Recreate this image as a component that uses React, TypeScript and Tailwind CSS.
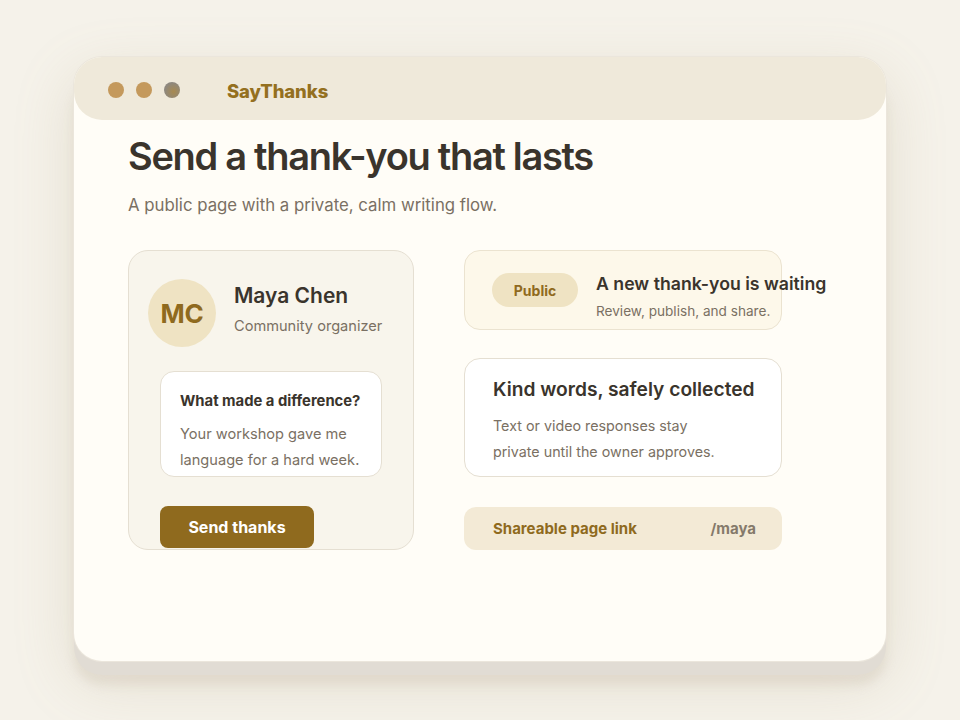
import React from "react";

export default function App() {
  return (
    <div
      className="w-[960px] h-[720px] bg-[#f5f2ea] overflow-hidden pt-[57px] pl-[74px]"
      style={{ fontFamily: "Inter, 'Noto Sans', sans-serif" }}
    >
      <div className="w-[812px] h-[604px] rounded-[28px] bg-[#fffdf7] shadow-[0_0_0_1px_#ebe6dc,0_14px_0_#e1dcd4,0_24px_10px_rgba(205,195,180,0.35),0_20px_60px_rgba(170,150,110,0.22)]">
        <div className="h-[63px] rounded-[28px] bg-[#efe9da] flex items-center pl-[34px] pt-[3px]">
          <div className="flex items-center gap-[12px]">
            <span className="w-[16px] h-[16px] rounded-full bg-[#c4995c]" />
            <span className="w-[16px] h-[16px] rounded-full bg-[#c4995c]" />
            <span className="w-[16px] h-[16px] rounded-full bg-[radial-gradient(circle_at_60%_60%,#a88a50,#8d8880_70%)]" />
          </div>
          <span className="ml-[47px] mt-[3px] text-[18.5px] font-extrabold text-[#94701f] tracking-[-0.1px]">SayThanks</span>
        </div>

        <div className="pl-[54px]">
          <h1 className="mt-[13px] text-[38px] leading-[46px] font-semibold text-[#3a342c] tracking-[-1.3px]">
            Send a thank-you that lasts
          </h1>
          <p className="mt-[14px] text-[16.8px] leading-[24px] text-[#7a7063]">
            A public page with a private, calm writing flow.
          </p>

          <div className="mt-[33px] flex gap-[50px]">
            <div className="w-[286px] h-[300px] rounded-[20px] bg-[#f8f5ec] border border-[#e5dfd2]">
              <div className="mt-[28px] ml-[19px] flex items-center gap-[18px]">
                <div className="w-[68px] h-[68px] shrink-0 rounded-full bg-[#efe3c3] flex items-center justify-center text-[26px] font-bold text-[#8f6a1e] tracking-[-0.3px]">
                  MC
                </div>
                <div className="-mt-[9px]">
                  <div className="text-[21px] leading-[28px] font-semibold text-[#3a342c]">Maya Chen</div>
                  <div className="mt-[6px] text-[14.6px] leading-[20px] text-[#7a7063]">Community organizer</div>
                </div>
              </div>

              <div className="mt-[24px] ml-[31px] w-[222px] h-[106px] rounded-[14px] bg-white border border-[#e5dfd2] pl-[19px] pt-[19px]">
                <div className="text-[14.8px] leading-[20px] font-bold text-[#3a342c]">What made a difference?</div>
                <div className="mt-[10px] text-[14.6px] leading-[26px] text-[#7a7063]">
                  Your workshop gave me
                  <br />
                  language for a hard week.
                </div>
              </div>

              <button className="mt-[29px] ml-[31px] w-[154px] h-[42px] rounded-[8px] bg-[#8f6a1e] text-white text-[16px] font-bold flex items-center justify-center">
                Send thanks
              </button>
            </div>

            <div className="w-[318px] flex flex-col">
              <div className="h-[80px] rounded-[16px] bg-[#fdf8ea] border border-[#ebe3d0] flex items-center pl-[27px]">
                <div className="w-[86px] h-[34px] shrink-0 rounded-full bg-[#efe3c3] flex items-center justify-center text-[14px] font-bold text-[#8f6a1e]">
                  Public
                </div>
                <div className="ml-[18px] mt-[13px] whitespace-nowrap">
                  <div className="text-[17.7px] leading-[24px] font-semibold text-[#3a342c]">A new thank-you is waiting</div>
                  <div className="mt-[5px] text-[13.6px] leading-[20px] text-[#7a7063]">Review, publish, and share.</div>
                </div>
              </div>

              <div className="mt-[28px] h-[119px] rounded-[16px] bg-white border border-[#e5dfd2] pl-[28px] pt-[16px]">
                <div className="text-[19.2px] leading-[28px] font-semibold text-[#3a342c]">Kind words, safely collected</div>
                <div className="mt-[10px] text-[14.3px] leading-[26px] text-[#7a7063]">
                  Text or video responses stay
                  <br />
                  private until the owner approves.
                </div>
              </div>

              <div className="mt-[30px] h-[43px] rounded-[12px] bg-[#f3ead6] flex items-center justify-between pl-[29px] pr-[26px] pt-[1px]">
                <span className="text-[15px] font-bold text-[#8f6a1e]">Shareable page link</span>
                <span className="text-[15px] font-bold text-[#857a6b]">/maya</span>
              </div>
            </div>
          </div>
        </div>
      </div>
    </div>
  );
}
